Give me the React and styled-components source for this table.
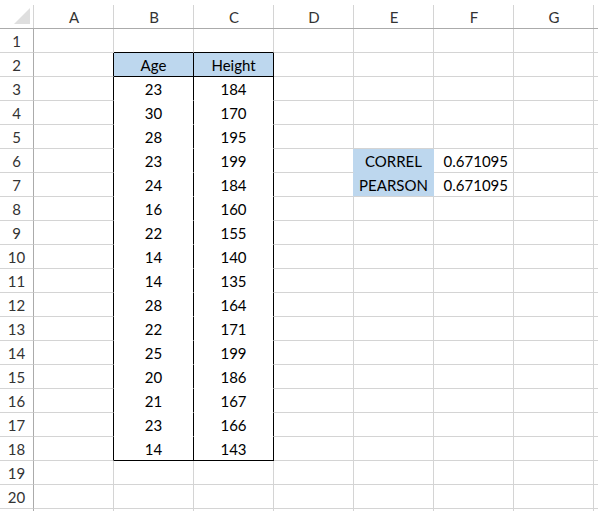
import React from "react";
import styled, { createGlobalStyle } from "styled-components";

const GRID = "#d4d4d4";
const HEAD_LINE = "#ababab";
const BLUE = "#bdd7ee";
const COLS = ["A", "B", "C", "D", "E", "F", "G", "H"];
const ROW_COUNT = 21;
// only a sliver of column H and row 21 is on screen, so no labels for them
const LABELLED_COLS = 7;
const LABELLED_ROWS = 20;

const ages = [23, 30, 28, 23, 24, 16, 22, 14, 14, 28, 22, 25, 20, 21, 23, 14];
const heights = [184, 170, 195, 199, 184, 160, 155, 140, 135, 164, 171, 199, 186, 167, 166, 143];

// cell values keyed by address
const values = { B2: "Age", C2: "Height", E6: "CORREL", F6: "0.671095", E7: "PEARSON", F7: "0.671095" };
ages.forEach((a, i) => {
    values[`B${i + 3}`] = a;
    values[`C${i + 3}`] = heights[i];
});

const inTable = (col, row) => (col === "B" || col === "C") && row >= 2 && row <= 18;

function cellStyle(col, row) {
    const addr = `${col}${row}`;
    let fill = "#fff";
    let right = GRID;
    let bottom = GRID;
    let align = "center";

    if (addr === "B2" || addr === "C2" || addr === "E6" || addr === "E7") fill = BLUE;

    // fills hide the gridlines
    if (addr === "E6" || addr === "E7") right = BLUE;
    if (addr === "E6") bottom = BLUE;
    if (col === "D" && (row === 6 || row === 7)) right = BLUE;
    if (inTable(col, row) && row >= 3 && row < 18) bottom = "#fff";

    // black table borders
    if ((col === "A" || col === "B" || col === "C") && row >= 2 && row <= 18) right = "#000";
    if ((col === "B" || col === "C") && (row === 1 || row === 2 || row === 18)) bottom = "#000";

    if (col === "F") align = "flex-end";
    return { fill, right, bottom, align };
}

const GlobalStyle = createGlobalStyle`
    html, body {
        margin: 0;
        padding: 0;
        background: #fff;
    }
`

function App() {
    return (
        <>
            <GlobalStyle />
            <Sheet>
                <Grid>
                    <Corner>
                        <svg width="17" height="17" viewBox="0 0 17 17">
                            <polygon points="16,0 16,16 0,16" fill="#dfdfdf" />
                        </svg>
                    </Corner>
                    {COLS.map((c, i) => (
                        <ColHead key={c}>{i < LABELLED_COLS ? c : ""}</ColHead>
                    ))}
                    {Array.from({ length: ROW_COUNT }, (_, i) => i + 1).map((row) => (
                        <React.Fragment key={row}>
                            <RowHead>{row <= LABELLED_ROWS ? row : ""}</RowHead>
                            {COLS.map((col) => {
                                const s = cellStyle(col, row);
                                const v = values[`${col}${row}`];
                                return (
                                    <Cell key={col} $fill={s.fill} $right={s.right} $bottom={s.bottom} $align={s.align}>
                                        {v}
                                    </Cell>
                                );
                            })}
                        </React.Fragment>
                    ))}
                </Grid>
            </Sheet>
        </>
    );
}

// 시트 영역
const Sheet = styled.div`
    width: 598px;
    height: 511px;
    overflow: hidden;
    background: #fff;
    font-family: Lato, "Open Sans", sans-serif;
`

const Grid = styled.div`
    display: grid;
    grid-template-columns: 34px repeat(8, 80px);
    grid-template-rows: 29px repeat(${ROW_COUNT}, 24px);
`

const Corner = styled.div`
    box-sizing: border-box;
    position: relative;
    display: flex;
    align-items: flex-end;
    justify-content: flex-end;
    padding: 0 3px 3px 0;
    border-bottom: 1px solid ${HEAD_LINE};

    &::after {
        content: "";
        position: absolute;
        right: 0;
        top: 5px;
        bottom: 0;
        width: 1px;
        background: ${GRID};
    }
`

const ColHead = styled.div`
    box-sizing: border-box;
    position: relative;
    display: flex;
    align-items: center;
    justify-content: center;
    padding-top: 5px;
    border-bottom: 1px solid ${HEAD_LINE};
    font-size: 15px;
    color: #333;

    &::after {
        content: "";
        position: absolute;
        right: 0;
        top: 5px;
        bottom: 0;
        width: 1px;
        background: ${GRID};
    }
`

const RowHead = styled.div`
    box-sizing: border-box;
    display: flex;
    align-items: center;
    justify-content: center;
    border-right: 1px solid ${HEAD_LINE};
    border-bottom: 1px solid ${GRID};
    font-size: 15px;
    color: #333;
`

const Cell = styled.div`
    box-sizing: border-box;
    display: flex;
    align-items: center;
    justify-content: ${(p) => p.$align};
    padding: 1px 5px 0 5px;
    background: ${(p) => p.$fill};
    border-right: 1px solid ${(p) => p.$right};
    border-bottom: 1px solid ${(p) => p.$bottom};
    font-size: 15px;
    color: #000;
    white-space: nowrap;
`

export default App;
